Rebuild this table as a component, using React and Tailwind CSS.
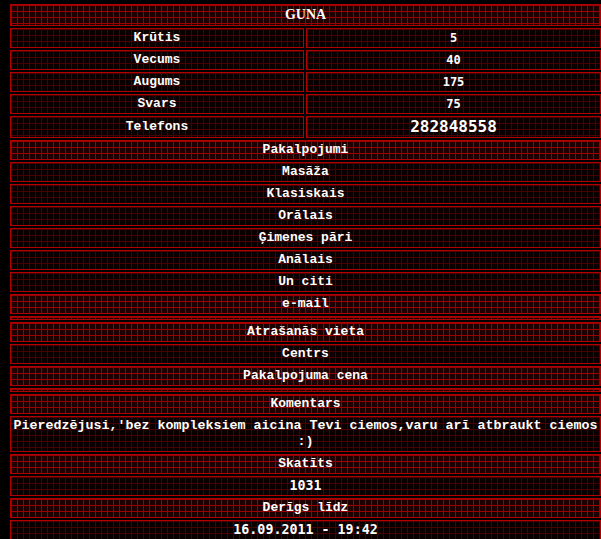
import React from "react";

const BRIGHT =
  "bg-[#1e0000] bg-[linear-gradient(to_right,#9a0000_1px,transparent_1px),linear-gradient(to_bottom,#9a0000_1px,transparent_1px)] bg-size-[6px_6px]";
const DIM =
  "bg-[#0a0000] bg-[linear-gradient(to_right,#480000_1px,transparent_1px),linear-gradient(to_bottom,#480000_1px,transparent_1px)] bg-size-[6px_6px]";

const LABEL = "font-['Liberation_Mono',monospace] font-bold text-[13px] leading-[16px]";
const VALUE = "font-['DejaVu_Sans_Mono',monospace] font-bold text-[12px] leading-[16px]";

function Cell({ bright, className = "", children }) {
  return (
    <div
      className={`border border-[#b00000] py-[1px] px-[2px] text-center text-white ${
        bright ? BRIGHT : DIM
      } ${className}`}
    >
      {children}
    </div>
  );
}

function Pair({ label, value, valueClass = VALUE }) {
  return (
    <div className="grid grid-cols-[294px_1fr] gap-[2px]">
      <Cell className={`flex flex-col justify-center ${LABEL}`}>{label}</Cell>
      <Cell className={`flex flex-col justify-center ${valueClass}`}>{value}</Cell>
    </div>
  );
}

function Head({ children }) {
  return (
    <Cell bright className={LABEL}>
      {children}
    </Cell>
  );
}

function Row({ children }) {
  return <Cell className={LABEL}>{children}</Cell>;
}

function Thin() {
  return <div className={`h-[4px] border border-[#b00000] ${BRIGHT}`} />;
}

export default function App() {
  return (
    <div className="min-h-[539px] w-[601px] bg-black pl-[10px] pt-[4px] flex flex-col gap-[2px] overflow-hidden">
      <Cell
        bright
        className="py-[2px] font-['Liberation_Serif',serif] font-bold text-[14px] leading-[16px]"
      >
        GUNA
      </Cell>
      <Pair label="Krūtis" value="5" />
      <Pair label="Vecums" value="40" />
      <Pair label="Augums" value="175" />
      <Pair label="Svars" value="75" />
      <Pair
        label="Telefons"
        value="282848558"
        valueClass="font-['DejaVu_Sans_Mono',monospace] font-bold text-[16px] leading-[18px]"
      />
      <Head>Pakalpojumi</Head>
      <Row>Masāža</Row>
      <Row>Klasiskais</Row>
      <Row>Orālais</Row>
      <Row>Ģimenes pāri</Row>
      <Row>Anālais</Row>
      <Row>Un citi</Row>
      <Head>e-mail</Head>
      <Thin />
      <Head>Atrašanās vieta</Head>
      <Row>Centrs</Row>
      <Head>Pakalpojuma cena</Head>
      <Thin />
      <Head>Komentars</Head>
      <Cell className="px-0 font-['Liberation_Mono',monospace] font-bold text-[13.33px] leading-[16px]">
        Pieredzējusi,'bez kompleksiem aicina Tevi ciemos,varu arī atbraukt ciemos :)
      </Cell>
      <Head>Skatīts</Head>
      <Cell className="font-['DejaVu_Sans_Mono',monospace] font-bold text-[13.33px] leading-[16px]">
        1031
      </Cell>
      <Head>Derīgs līdz</Head>
      <Cell className="font-['DejaVu_Sans_Mono',monospace] font-bold text-[13.33px] leading-[16px]">
        16.09.2011 - 19:42
      </Cell>
    </div>
  );
}
